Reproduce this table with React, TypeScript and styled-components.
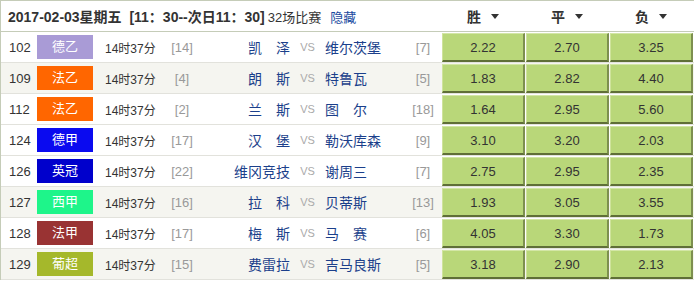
import styled, { createGlobalStyle } from "styled-components";

const GlobalStyle = createGlobalStyle`
  body {
    margin: 0;
    background: #fff;
    font-family: "Liberation Sans", "Noto Sans CJK SC", sans-serif;
    font-size: 12px;
    color: #333;
  }
`;

interface IMatch {
  id: number;
  league: string;
  color: string;
  time: string;
  homeRank: number;
  home: string;
  away: string;
  awayRank: number;
  odds: string[];
  shaded?: boolean;
}

const Board = styled.div`
  width: 693px;
  border-left: 1px solid #c5ccb8;
  border-top: 1px solid #c5ccb8;
`;

const HeadRow = styled.div`
  display: flex;
  align-items: center;
  height: 30px;
  border-bottom: 1px solid #c5ccb8;
`;

const Title = styled.div`
  flex: 0 0 440px;
  display: flex;
  align-items: center;
  padding-left: 7px;
  box-sizing: border-box;
  font-size: 13px;
  white-space: pre;
  b {
    font-size: 14px;
    color: #333;
  }
  span {
    margin-left: 3px;
  }
  a {
    margin-left: 9px;
    color: #1a4aa0;
    text-decoration: none;
  }
`;

const HeadCell = styled.div`
  flex: 0 0 84px;
  display: flex;
  justify-content: center;
  align-items: center;
  font-size: 14px;
  font-weight: bold;
  color: #333;
`;

const Arrow = styled.i`
  display: inline-block;
  margin-left: 10px;
  border-left: 4px solid transparent;
  border-right: 4px solid transparent;
  border-top: 5px solid #333;
`;

const Row = styled.div<{ $shaded?: boolean }>`
  display: flex;
  align-items: center;
  height: 30px;
  border-bottom: 1px solid #e2e2dc;
  background: ${(p) => (p.$shaded ? "#f5f5f0" : "#fff")};
`;

const Num = styled.div`
  flex: 0 0 36px;
  padding-left: 8px;
  box-sizing: border-box;
  font-size: 13px;
`;

const Badge = styled.div<{ $bg: string }>`
  flex: 0 0 56px;
  height: 24px;
  line-height: 24px;
  text-align: center;
  color: #fff;
  font-size: 13px;
  background: ${(p) => p.$bg};
`;

const Time = styled.div`
  flex: 0 0 63px;
  padding-left: 12px;
  box-sizing: border-box;
  white-space: nowrap;
  font-size: 12px;
`;

const Rank = styled.div<{ $w: number }>`
  flex: 0 0 ${(p) => p.$w}px;
  text-align: center;
  color: #999;
  font-size: 13px;
`;

const Team = styled.div<{ $align: "left" | "right"; $w: number }>`
  flex: 0 0 ${(p) => p.$w}px;
  text-align: ${(p) => p.$align};
  color: #1b3f8b;
  font-size: 14px;
  white-space: pre;
`;

const Vs = styled.div`
  flex: 0 0 35px;
  text-align: center;
  color: #aaa;
  font-size: 11px;
`;

const Odds = styled.div`
  display: flex;
  align-self: stretch;
  gap: 1px;
  padding: 1px 1px 0 1px;
`;

const Odd = styled.div`
  flex: 0 0 80px;
  display: flex;
  align-items: center;
  justify-content: center;
  background: #b9d779;
  border-top: 1px solid #d3e6a6;
  border-left: 1px solid #cfe39c;
  border-right: 2px solid #7d8f4f;
  border-bottom: 2px solid #5f6f37;
  color: #333;
  font-size: 13px;
`;

const matches: IMatch[] = [
  { id: 102, league: "德乙", color: "#a99bd6", time: "14时37分", homeRank: 14, home: "凯　泽", away: "维尔茨堡", awayRank: 7, odds: ["2.22", "2.70", "3.25"] },
  { id: 109, league: "法乙", color: "#ff6600", time: "14时37分", homeRank: 4, home: "朗　斯", away: "特鲁瓦", awayRank: 5, odds: ["1.83", "2.82", "4.40"], shaded: true },
  { id: 112, league: "法乙", color: "#ff6600", time: "14时37分", homeRank: 2, home: "兰　斯", away: "图　尔", awayRank: 18, odds: ["1.64", "2.95", "5.60"] },
  { id: 124, league: "德甲", color: "#0a0af0", time: "14时37分", homeRank: 17, home: "汉　堡", away: "勒沃库森", awayRank: 9, odds: ["3.10", "3.20", "2.03"] },
  { id: 126, league: "英冠", color: "#0000cc", time: "14时37分", homeRank: 22, home: "维冈竞技", away: "谢周三", awayRank: 7, odds: ["2.75", "2.95", "2.35"] },
  { id: 127, league: "西甲", color: "#1ef58a", time: "14时37分", homeRank: 16, home: "拉　科", away: "贝蒂斯", awayRank: 13, odds: ["1.93", "3.05", "3.55"], shaded: true },
  { id: 128, league: "法甲", color: "#993333", time: "14时37分", homeRank: 17, home: "梅　斯", away: "马　赛", awayRank: 6, odds: ["4.05", "3.30", "1.73"] },
  { id: 129, league: "葡超", color: "#a5b82b", time: "14时37分", homeRank: 15, home: "费雷拉", away: "吉马良斯", awayRank: 5, odds: ["3.18", "2.90", "2.13"], shaded: true },
];

const MatchRow = ({ m }: { m: IMatch }) => (
  <Row $shaded={m.shaded}>
    <Num>{m.id}</Num>
    <Badge $bg={m.color}>{m.league}</Badge>
    <Time>{m.time}</Time>
    <Rank $w={52}>[{m.homeRank}]</Rank>
    <Team $align="right" $w={82}>{m.home}</Team>
    <Vs>VS</Vs>
    <Team $align="left" $w={80}>{m.away}</Team>
    <Rank $w={36}>[{m.awayRank}]</Rank>
    <Odds>
      {m.odds.map((o, i) => (
        <Odd key={i}>{o}</Odd>
      ))}
    </Odds>
  </Row>
);

function App() {
  return (
    <>
      <GlobalStyle />
      <Board>
        <HeadRow>
          <Title>
            <b>2017-02-03星期五  [11：30--次日11：30]</b>
            <span>32场比赛</span>
            <a href="#">隐藏</a>
          </Title>
          {["胜", "平", "负"].map((h) => (
            <HeadCell key={h}>
              {h}
              <Arrow />
            </HeadCell>
          ))}
        </HeadRow>
        {matches.map((m) => (
          <MatchRow key={m.id} m={m} />
        ))}
      </Board>
    </>
  );
}

export default App;
